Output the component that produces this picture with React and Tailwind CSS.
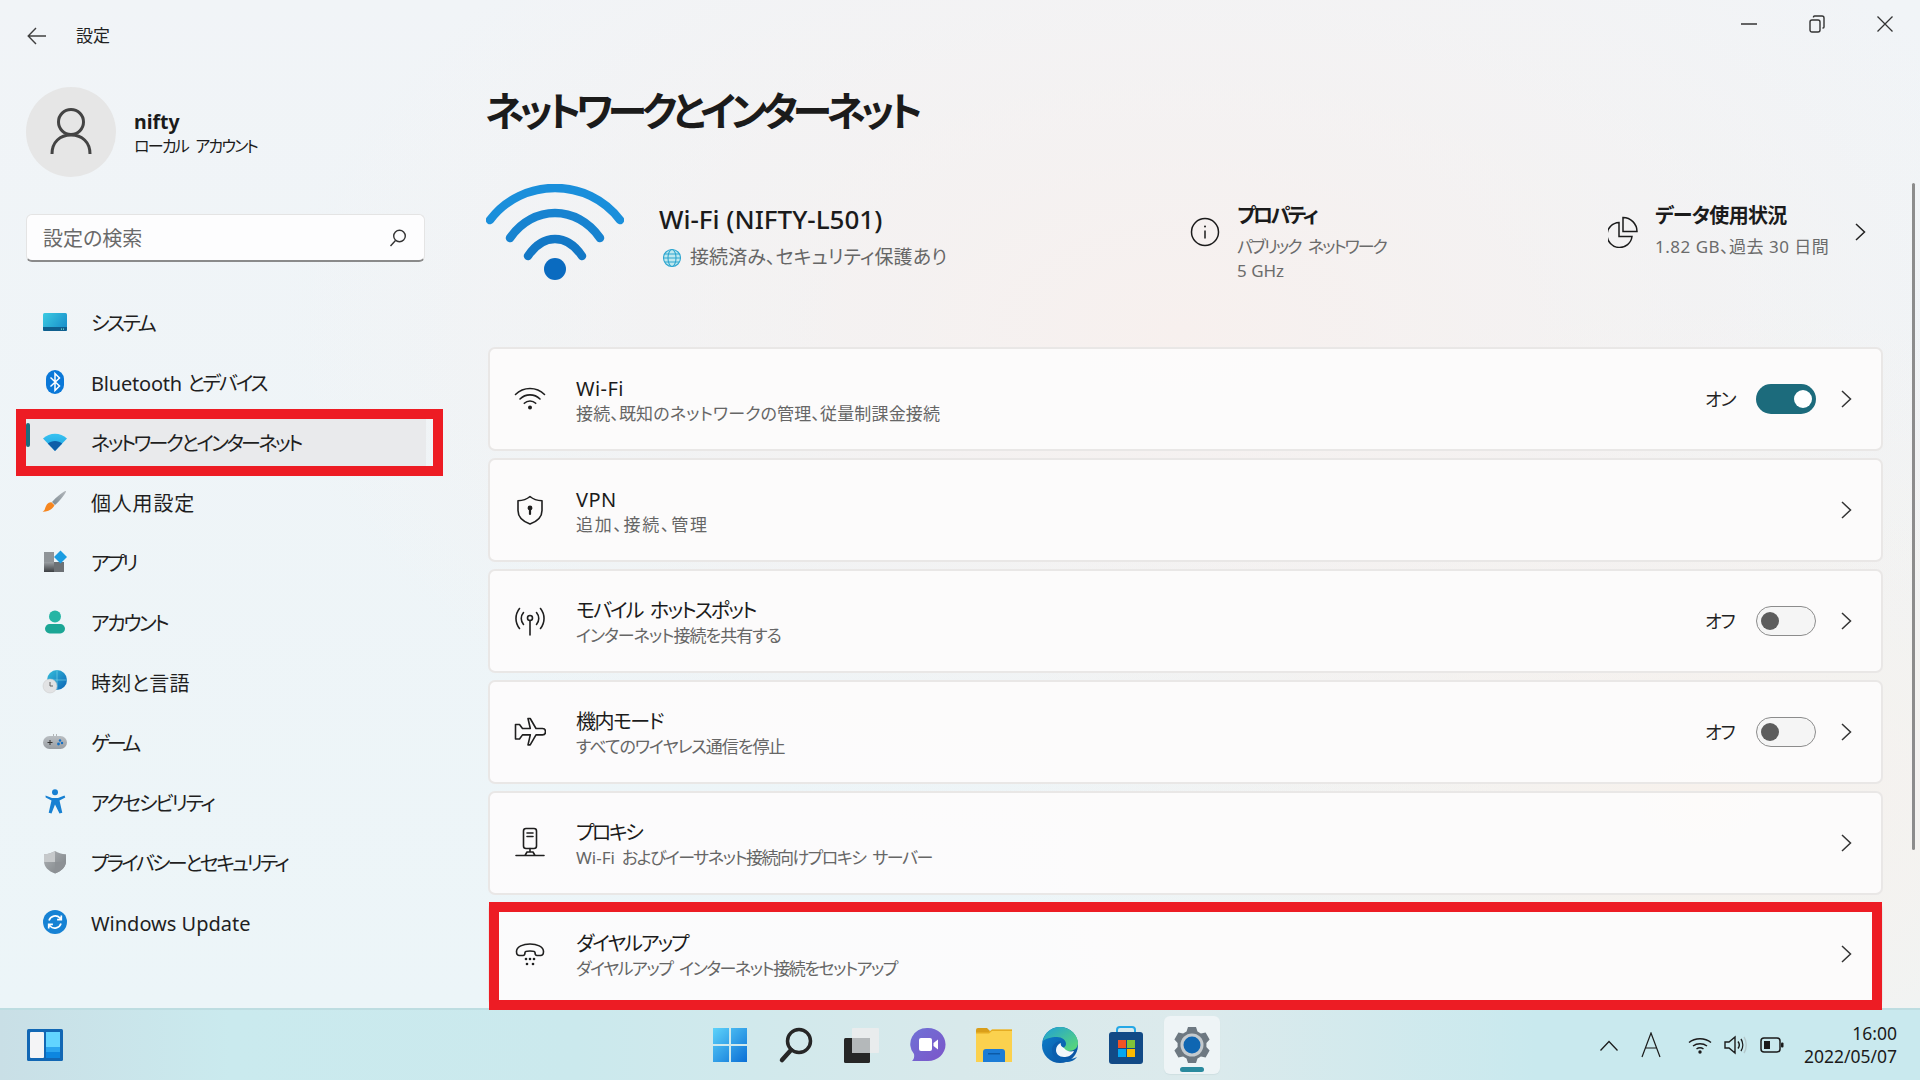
import React from "react";

const Arrow = () => (
  <svg width="20" height="18" viewBox="0 0 20 18" fill="none" stroke="#404040" strokeWidth="1.4"><path d="M19 9H1.5M9 1L1.2 9l7.8 8" /></svg>
);

const Chevron = ({ c = "#333" }) => (
  <svg width="11" height="18" viewBox="0 0 11 18" fill="none" stroke={c} strokeWidth="1.5"><path d="M1 1l8.5 8L1 17" /></svg>
);

const navIcons = {
  system: (
    <svg width="26" height="20" viewBox="0 0 26 20"><defs><linearGradient id="s1" x1="0" y1="0" x2="1" y2="0.6"><stop offset="0" stopColor="#3ccbe2" /><stop offset="1" stopColor="#1b93cc" /></linearGradient></defs><rect x="1" y="1" width="24" height="18" rx="1.5" fill="url(#s1)" /><path d="M1 15h24v2.5a1.5 1.5 0 0 1-1.5 1.5h-21A1.5 1.5 0 0 1 1 17.5z" fill="#0f5f8e" /><rect x="19" y="16.6" width="1" height="1" fill="#9fd" /><rect x="21" y="16.6" width="1" height="1" fill="#9fd" /></svg>
  ),
  bt: (
    <svg width="20" height="26" viewBox="0 0 20 26"><rect x="1" y="1" width="18" height="24" rx="9" fill="#0a78d8" /><path d="M5.5 8.5l9 8.5-4.5 4.500V4.500l4.500 4.500-9 8.500" fill="none" stroke="#fff" strokeWidth="1.5" /></svg>
  ),
  net: (
    <svg width="26" height="20" viewBox="0 0 26 20"><defs><linearGradient id="n1" x1="0" y1="0" x2="0" y2="1"><stop offset="0" stopColor="#38c3f1" /><stop offset="1" stopColor="#1a9fe0" /></linearGradient></defs><path d="M1 6.500C7.500 0 18.500 0 25 6.500L13 19z" fill="url(#n1)" /><path d="M5.800 11.500C9.800 8 16.200 8 20.200 11.500L13 19z" fill="#0f5ea8" /></svg>
  ),
  brush: (
    <svg width="26" height="24" viewBox="0 0 26 24"><defs><linearGradient id="b1" x1="0" y1="1" x2="1" y2="0"><stop offset="0" stopColor="#7d8a92" /><stop offset="1" stopColor="#b3b8bc" /></linearGradient></defs><path d="M24 1c.8.8-6 10-11 14l-3-3C14 7 23 .2 24 1z" fill="url(#b1)" /><path d="M9.500 12.300l3 3c-1.500 3.500-6 6.500-12 6.500 3-1.500 2.500-5 4.500-7.500 1.200-1.500 3-2.200 4.500-2z" fill="#f6861f" /></svg>
  ),
  apps: (
    <svg width="24" height="24" viewBox="0 0 24 24"><defs><linearGradient id="a1" x1="0" y1="0" x2="0" y2="1"><stop offset="0" stopColor="#9ba0a4" /><stop offset="1" stopColor="#3c3f42" /></linearGradient></defs><rect x="1" y="2" width="10" height="10" fill="#8f9498" /><rect x="1" y="12" width="10" height="10" fill="url(#a1)" /><rect x="11" y="12" width="10" height="10" fill="#6d7175" /><path d="M17.500 0.500L24 7l-6.500 6.500L11 7z" fill="#1b9de2" /></svg>
  ),
  account: (
    <svg width="22" height="24" viewBox="0 0 22 24"><circle cx="11" cy="6.500" r="6" fill="#26b5a4" /><rect x="1" y="14" width="20" height="9.500" rx="4.700" fill="#1ba695" /></svg>
  ),
  time: (
    <svg width="26" height="24" viewBox="0 0 26 24"><defs><linearGradient id="t1" x1="0" y1="0" x2="1" y2="1"><stop offset="0" stopColor="#35c0dc" /><stop offset="1" stopColor="#0b62b4" /></linearGradient></defs><circle cx="15" cy="10" r="10" fill="url(#t1)" /><path d="M5 10h20M15 0v20" stroke="#7fd6ea" strokeWidth=".6" /><circle cx="8" cy="16" r="7" fill="#e2e3e4" stroke="#c8c8c8" strokeWidth=".5" /><path d="M8 12v4h3" fill="none" stroke="#555" strokeWidth=".9" /></svg>
  ),
  game: (
    <svg width="26" height="16" viewBox="0 0 26 16"><defs><linearGradient id="g1" x1="0" y1="0" x2="0" y2="1"><stop offset="0" stopColor="#b9bec2" /><stop offset="1" stopColor="#999ea3" /></linearGradient></defs><rect x="1" y="2" width="24" height="13" rx="6.500" fill="url(#g1)" /><path d="M5.500 8.500h5M8 6v5" stroke="#333" strokeWidth="1" /><circle cx="18" cy="6.500" r="1.200" fill="#1570c4" /><circle cx="16.500" cy="10" r="1.400" fill="#1570c4" /><circle cx="20" cy="9" r="1.200" fill="#1570c4" /><rect x="11" y="0.500" width="1" height="1" fill="#777" /><rect x="14" y="0.500" width="1" height="1" fill="#777" /></svg>
  ),
  access: (
    <svg width="22" height="26" viewBox="0 0 22 26"><circle cx="11" cy="3.200" r="3" fill="#1780d2" /><path d="M1.500 6.500l6.500 2.400h6l6.500-2.400.8 2-5.800 3 2.800 12.200-2.800.8L11 15.500 7.500 24.500l-2.800-.8 2.800-12.200-5.800-3z" fill="#1780d2" /></svg>
  ),
  privacy: (
    <svg width="24" height="24" viewBox="0 0 24 24"><defs><linearGradient id="p1" x1="0" y1="0" x2="1" y2="1"><stop offset="0" stopColor="#aeb2b5" /><stop offset="1" stopColor="#7c8185" /></linearGradient></defs><path d="M12 1c3 2 6.500 3 11 3.200v7C23 17 18.500 21 12 23.500 5.500 21 1 17 1 11.200v-7C5.500 4 9 3 12 1z" fill="url(#p1)" /><path d="M12 1v11H1v-.8-7C5.500 4 9 3 12 1z" fill="#c6c9cb" /><path d="M12 12h11c-.6 5.500-5 9.200-11 11.500z" fill="#8d9195" /></svg>
  ),
  update: (
    <svg width="24" height="24" viewBox="0 0 24 24"><circle cx="12" cy="12" r="12" fill="#1682d4" /><path d="M6 10.500a6.500 6.500 0 0 1 11-2.500l1 1.500M18.300 5.500v4.200h-4.200M18 13.500a6.500 6.500 0 0 1-11 2.500l-1-1.500M5.700 18.500v-4.200h4.200" fill="none" stroke="#fff" strokeWidth="1.700" /></svg>
  ),
};

const navItems = [
  ["system", "システム", "tracking-[-2.400px]"],
  ["bt", <>Bluetooth <span className="tracking-[-2.200px]">とデバイス</span></>, "tracking-[-0.200px]"],
  ["net", "ネットワークとインターネット", "tracking-[-2.600px]", true],
  ["brush", "個人用設定", "tracking-[0.800px]"],
  ["apps", "アプリ", "tracking-[-3px]"],
  ["account", "アカウント", "tracking-[-2.400px]"],
  ["time", "時刻と言語", "tracking-[0.200px]"],
  ["game", "ゲーム", "tracking-[-3.500px]"],
  ["access", "アクセシビリティ", "tracking-[-2.200px]"],
  ["privacy", "プライバシーとセキュリティ", "tracking-[-2.700px]"],
  ["update", "Windows Update", "tracking-[0px]"],
];

const Ln = ({ children, w = 32, h = 32, sw = 1.6 }) => (
  <svg width={w} height={h} viewBox={`0 0 ${w} ${h}`} fill="none" stroke="#1f1f1f" strokeWidth={sw} strokeLinecap="round" strokeLinejoin="round">{children}</svg>
);

const cardIcons = {
  wifi: (
    <Ln>
      <path d="M1.500 11.500C9.500 3.500 22.500 3.500 30.500 11.500M6 16C11.500 10.500 20.500 10.500 26 16M10.300 20.300C13.500 17.200 18.500 17.200 21.700 20.300" />
      <circle cx="16" cy="24.500" r="2" fill="#1f1f1f" stroke="none" />
    </Ln>
  ),
  vpn: (
    <Ln>
      <path d="M16 2.500c3 2.500 7 4 12 4.300v9.700c0 6.500-4.500 10.800-12 13.500C8.500 27.300 4 23 4 16.500V6.800c5-.3 9-1.800 12-4.300z" />
      <circle cx="16" cy="14" r="2.400" fill="#1f1f1f" stroke="none" />
      <path d="M16 14v6" strokeWidth="2.200" />
    </Ln>
  ),
  hotspot: (
    <Ln>
      <circle cx="16" cy="13" r="2.500" />
      <path d="M16 15.500V30M9.500 7.500C6.500 11 6.500 16 9.500 19.500M22.500 7.500C25.500 11 25.500 16 22.500 19.500M5.500 3.500C.8 9.500 .8 17.500 5.500 23.500M26.500 3.500C31.200 9.500 31.200 17.500 26.500 23.500" />
    </Ln>
  ),
  plane: (
    <Ln>
      <path d="M14 2.500h2.200L22 12.500h6.500c2 0 3 1.500 3 3.200s-1 3.200-3 3.200H22l-5.800 10h-2.200l2.300-10H8.500L5.500 23H1.500V8.500h4l3 4h7.800z" />
    </Ln>
  ),
  proxy: (
    <Ln>
      <rect x="9.500" y="1.500" width="13" height="20" rx="2.500" />
      <path d="M13 6h6M13 9.500h6M16 21.500v3M2 28.500h9M21 28.500h9M11 28.500l2-3.500h6l2 3.500z" />
    </Ln>
  ),
  dial: (
    <Ln>
      <path d="M2.500 13.500C2.500 3.500 29.500 3.500 29.500 13.500c0 3-1 4-3 4h-3.500c-1.500 0-2-1-2-3 0-2-10-2-10 0 0 2-.5 3-2 3H5.500c-2 0-3-1-3-4z" />
      <g fill="#1f1f1f" stroke="none"><circle cx="12" cy="21" r="1.300" /><circle cx="16" cy="21" r="1.300" /><circle cx="20" cy="21" r="1.300" /><circle cx="13" cy="26" r="1.300" /><circle cx="19" cy="26" r="1.300" /></g>
    </Ln>
  ),
};

const cards = [
  ["wifi", "Wi-Fi", "接続、既知のネットワークの管理、従量制課金接続", "オン", "tracking-[0.400px]", "tracking-[0.150px]"],
  ["vpn", "VPN", "追加、接続、管理", null, "tracking-[0.400px]", "tracking-[1.700px]"],
  ["hotspot", "モバイル ホットスポット", "インターネット接続を共有する", "オフ", "tracking-[-1.900px] [word-spacing:4px]", "tracking-[-1px]"],
  ["plane", "機内モード", "すべてのワイヤレス通信を停止", "オフ", "tracking-[-1.500px]", "tracking-[-1px]"],
  ["proxy", "プロキシ", <><span className="tracking-[0px]">Wi-Fi</span> およびイーサネット接続向けプロキシ サーバー</>, null, "tracking-[-2.500px]", "tracking-[-1.500px] [word-spacing:4px]"],
  ["dial", "ダイヤルアップ", "ダイヤルアップ インターネット接続をセットアップ", null, "tracking-[-2px]", "tracking-[-1.500px] [word-spacing:4px]"],
];

function Toggle({ on }) {
  return on ? (
    <div className="flex h-[30px] w-[60px] items-center justify-end rounded-full bg-[#1c6b7c] pr-[4px]">
      <div className="h-[18px] w-[18px] rounded-full bg-white" />
    </div>
  ) : (
    <div className="flex h-[30px] w-[60px] items-center rounded-full border-[1.5px] border-[#8c8c8c] bg-[#f5f5f5] pl-[4px]">
      <div className="h-[18px] w-[18px] rounded-full bg-[#5d5d5d]" />
    </div>
  );
}

function Card({ icon, title, sub, state, tt, ts }) {
  return (
    <div className="flex h-[104px] shrink-0 items-center rounded-[7px] border-2 border-[#e9e7e6] bg-[#fdfcfc]/90 pr-[29px]">
      <div className="flex w-[79px] justify-center pl-[1px]">{cardIcons[icon]}</div>
      <div className="ml-[7px] flex flex-1 flex-col pt-[3px]">
        <div className={"text-[20px] leading-[26px] text-[#1b1b1b] " + tt}>{title}</div>
        <div className={"text-[17px] leading-[24px] text-[#666] " + ts}>{sub}</div>
      </div>
      {state && (
        <div className="flex items-center">
          <span className="w-[51px] text-[18px] tracking-[-1px] text-[#222]">{state}</span>
          <Toggle on={state === "オン"} />
        </div>
      )}
      <div className="ml-[25px]"><Chevron /></div>
    </div>
  );
}

const tb = {
  win: (
    <svg width="36" height="36" viewBox="0 0 36 36"><defs><linearGradient id="w1" x1="0" y1="0" x2="1" y2="1"><stop offset="0" stopColor="#5ed3fa" /><stop offset="1" stopColor="#0a6fd6" /></linearGradient></defs><path d="M1 1h16v16H1zM19 1h16v16H19zM1 19h16v16H1zM19 19h16v16H19z" fill="url(#w1)" /></svg>
  ),
  search: (
    <svg width="36" height="38" viewBox="0 0 36 38" fill="none"><circle cx="21" cy="15" r="11.500" stroke="#262626" strokeWidth="3.500" /><path d="M13 24L4 34" stroke="#262626" strokeWidth="4.500" strokeLinecap="round" /></svg>
  ),
  task: (
    <svg width="38" height="36" viewBox="0 0 38 36"><rect x="1" y="11" width="26" height="25" rx="1.500" fill="#262626" /><rect x="9" y="1" width="27" height="25" rx="1" fill="#e9eced" /><rect x="9" y="11" width="18" height="15" fill="#b4b8ba" /></svg>
  ),
  chat: (
    <svg width="36" height="36" viewBox="0 0 36 36"><defs><linearGradient id="c1" x1="0" y1="0" x2="1" y2="1"><stop offset="0" stopColor="#6f72d6" /><stop offset="1" stopColor="#7c55c9" /></linearGradient></defs><path d="M18 1a17 16 0 0 1 0 33H2c2-1.500 2.500-4 2-7A17 16 0 0 1 18 1z" fill="url(#c1)" /><rect x="9" y="11" width="13" height="13" rx="2" fill="#fff" /><path d="M23.500 16l4.500-3.500v10L23.500 19z" fill="#fff" /></svg>
  ),
  folder: (
    <svg width="38" height="36" viewBox="0 0 38 36"><path d="M1 3a2 2 0 0 1 2-2h9l4 4h-15z" fill="#d99e1a" /><path d="M1 5h13l3-2.500h20V35H1z" fill="#fbd14e" /><path d="M1 5h13l3-2.500h20v1.500H17L14 6.500H1z" fill="#e5ac22" /><path d="M8 35V25a3 3 0 0 1 3-3h16a3 3 0 0 1 3 3v10z" fill="#1c7cd6" /><rect x="13" y="26" width="12" height="1.500" fill="#0c5aa6" /></svg>
  ),
  edge: (
    <svg width="38" height="38" viewBox="0 0 38 38"><defs><linearGradient id="e1" x1="0" y1="0" x2="1" y2="1"><stop offset="0" stopColor="#1f9fd6" /><stop offset="1" stopColor="#5fdb72" /></linearGradient><linearGradient id="e2" x1="0" y1="0" x2="1" y2="1"><stop offset="0" stopColor="#0d82ce" /><stop offset="1" stopColor="#094c9c" /></linearGradient></defs><circle cx="19" cy="19" r="18" fill="url(#e2)" /><path d="M2 15C4 6 11 1 19 1c10 0 18 8 18 16 0 5-4 8-9 8-3 0-6-1-7-3 2 0 4-2 4-4 0-4-4-7-9-7-6 0-12 2-14 4z" fill="url(#e1)" /><path d="M20 15c-5 0-9 4-9 9 0 6 5 12 14 12 5 0 9-2 11-5-2 1-5 2-8 2-7 0-11-4-11-9 0-4 1-7 3-9z" fill="#0a5fae" /><path d="M23 22c2 3 6 4 10 3-2 5-7 6-10 6-5 0-8-3-8-7 0-3 2-6 5-7-1 2 1 4 3 5z" fill="#fff" opacity=".95" /></svg>
  ),
  store: (
    <svg width="36" height="38" viewBox="0 0 36 38"><path d="M9 8V4a3 3 0 0 1 3-3h12a3 3 0 0 1 3 3v4" fill="none" stroke="#25a8e6" strokeWidth="2" /><rect x="1" y="6" width="34" height="32" rx="3" fill="#124a86" /><rect x="10" y="14" width="8" height="8" fill="#f25325" /><rect x="19" y="14" width="8" height="8" fill="#80c33a" /><rect x="10" y="23" width="8" height="8" fill="#05a6f0" /><rect x="19" y="23" width="8" height="8" fill="#fdb900" /></svg>
  ),
  gear: (
    <svg width="38" height="38" viewBox="0 0 38 38"><path d="M15 1h8l1.500 4.600 3.400 1.900 4.700-1 4 6.900-3.200 3.600v4l3.200 3.600-4 6.900-4.700-1-3.400 1.900L23 37h-8l-1.500-4.600-3.400-1.900-4.700 1-4-6.900L4.600 21v-4L1.400 13.400l4-6.900 4.700 1 3.400-1.900z" fill="#6d7881" /><circle cx="19" cy="19" r="11.500" fill="#c4cace" /><circle cx="19" cy="19" r="8.500" fill="#0f66b2" /></svg>
  ),
};

const taskItems = ["win", "search", "task", "chat", "folder", "edge", "store"];

export default function App() {
  return (
    <div className="relative flex h-[1080px] w-[1920px] flex-col overflow-hidden [font-family:'Noto_Sans','Noto_Sans_CJK_JP',sans-serif] [font-feature-settings:'palt'] text-[#1b1b1b]">
      <div className="flex h-[1008px] overflow-hidden bg-[radial-gradient(ellipse_900px_520px_at_1180px_330px,#f7f0ee_0%,#f7f0ee00_100%),radial-gradient(ellipse_700px_500px_at_1700px_800px,#f7f1ec_0%,#f7f1ec00_100%),linear-gradient(180deg,#f1f4f7_0%,#ecf5f8_100%)]">
        {/* sidebar */}
        <aside className="flex w-[486px] shrink-0 flex-col pl-[26px]">
          <div className="flex h-[72px] items-center pl-[1px]">
            <Arrow />
            <span className="ml-[29px] text-[17px] text-[#222]">設定</span>
          </div>
          <div className="mt-[15px] flex items-center">
            <div className="flex h-[90px] w-[90px] items-center justify-center rounded-full bg-[#e6e6e6]">
              <svg width="42" height="48" viewBox="0 0 42 48" fill="none" stroke="#444" strokeWidth="3"><circle cx="21" cy="14" r="12.500" /><path d="M2 46c0-12 8-19 19-19s19 7 19 19" /></svg>
            </div>
            <div className="ml-[18px] flex flex-col pt-[2px]">
              <span className="text-[19.500px] font-bold leading-[26px]">nifty</span>
              <span className="text-[16px] leading-[22px] tracking-[-1.800px] [word-spacing:5px]">ローカル アカウント</span>
            </div>
          </div>
          <div className="mt-[37px] flex h-[48px] w-[399px] items-center justify-between rounded-[6px] border border-[#e4e4e4] border-b-2 border-b-[#8a8a8a] bg-[#fdfdfe] pl-[16px] pr-[17px]">
            <span className="pt-[2px] text-[20px] text-[#6a6a6a]">設定の検索</span>
            <svg width="18" height="18" viewBox="0 0 18 18" fill="none" stroke="#333" strokeWidth="1.400"><circle cx="10.500" cy="7" r="5.800" /><path d="M6.500 11.500L1.500 17" /></svg>
          </div>
          <nav className="mt-[30px] flex flex-col">
            {navItems.map(([ic, label, tr, sel]) => (
              <div key={ic} className={sel ? "relative flex h-[60px] w-[400px] items-center bg-[#e9eaec]" : "flex h-[60px] w-[400px] items-center"}>
                {sel && <div className="absolute left-0 top-[11px] h-[24px] w-[4px] rounded-[2px] bg-[#1c6b7c]" />}
                <div className="flex w-[58px] justify-center">{navIcons[ic]}</div>
                <span className={"ml-[7px] pt-[3px] text-[20px] text-[#1f1f1f] " + tr}>{label}</span>
              </div>
            ))}
          </nav>
        </aside>

        {/* main */}
        <main className="flex min-w-0 flex-1 flex-col pr-[37px]">
          <h1 className="-ml-[1px] mt-[86px] h-[50px] text-[40px] font-bold leading-[50px] tracking-[-5.300px] text-[#1b1b1b]">ネットワークとインターネット</h1>
          <div className="mt-[48px] flex h-[96px] shrink-0 items-center">
            <svg width="138" height="96" viewBox="0 0 138 96" fill="none" className="shrink-0"><g strokeWidth="8.500" strokeLinecap="round"><path d="M4 36C36 -6.700 102 -6.700 134 36" stroke="#1a8fdb" /><path d="M24 54C47 20.700 91 20.700 114 54" stroke="#1783d0" /><path d="M42 72C57 49.300 81 49.300 96 72" stroke="#1378c6" /></g><circle cx="69" cy="85" r="11" fill="#0a6bc0" /></svg>
            <div className="ml-[35px] flex w-[531px] flex-col pt-[9px]">
              <div className="text-[26px] font-medium leading-[36px] text-[#1b1b1b]">Wi-Fi (NIFTY-L501)</div>
              <div className="mt-[6px] flex items-center">
                <svg width="20" height="20" viewBox="0 0 20 20" fill="none" stroke="#2ea6d0" strokeWidth="1.100" className="ml-[3px]"><circle cx="10" cy="10" r="8.500" fill="#bfe8ee" /><ellipse cx="10" cy="10" rx="4" ry="8.500" /><path d="M1.500 10h17M2.500 6h15M2.500 14h15" /></svg>
                <span className="ml-[8px] text-[19px] tracking-[0.1px] text-[#666]">接続済み、セキュリティ保護あり</span>
              </div>
            </div>
            <div className="flex w-[418px] items-center">
              <svg width="30" height="30" viewBox="0 0 30 30" fill="none" stroke="#1b1b1b" strokeWidth="1.500" className="shrink-0"><circle cx="15" cy="15" r="13.500" /><path d="M15 13.500v8" /><circle cx="15" cy="9.500" r="1" fill="#1b1b1b" stroke="none" /></svg>
              <div className="ml-[17px] flex flex-col pt-[22px]">
                <span className="text-[20px] font-bold leading-[26px] tracking-[-2.600px]">プロパティ</span>
                <span className="mt-[5px] text-[17px] leading-[25px] tracking-[-2px] [word-spacing:5px] text-[#6b6b6b]">パブリック ネットワーク</span>
                <span className="text-[17px] leading-[24px] text-[#6b6b6b]">5 GHz</span>
              </div>
            </div>
            <div className="flex flex-1 items-center">
              <svg width="30" height="32" viewBox="0 0 30 32" fill="none" stroke="#1b1b1b" strokeWidth="1.500" className="shrink-0"><path d="M11 6.500A12.500 12.500 0 1 0 24 20.500H11z" /><path d="M15 1.500a14 14 0 0 1 14 14H15z" /></svg>
              <div className="ml-[17px] flex flex-col pb-[2px]">
                <span className="text-[20px] font-bold leading-[26px] tracking-[-0.700px]">データ使用状況</span>
                <span className="mt-[4.500px] text-[17px] leading-[25px] tracking-[0.500px] text-[#6b6b6b]">1.82 GB、過去 30 日間</span>
              </div>
              <div className="ml-auto mr-[17px]"><Chevron c="#222" /></div>
            </div>
          </div>
          <div className="ml-[2px] mt-[67px] flex flex-col gap-[7px]">
            {cards.map(([icon, title, sub, state, tt, ts]) => (
              <Card key={icon} icon={icon} title={title} sub={sub} state={state} tt={tt} ts={ts} />
            ))}
          </div>
        </main>
      </div>

      {/* taskbar */}
      <footer className="flex h-[72px] shrink-0 items-center border-t-2 border-[#bddde1] bg-[linear-gradient(90deg,#c9dfe6_0%,#caeaee_12%,#cbe9ed_30%,#d8e9eb_50%,#dceaec_62%,#c9e9ee_80%,#c9e9ee_100%)]">
        <div className="w-[697px] pl-[27px]">
          <svg width="36" height="32" viewBox="0 0 36 32"><rect width="36" height="32" rx="1.500" fill="#1267b4" /><rect x="3" y="3" width="14" height="26" rx="1" fill="#f4f4f6" /><rect x="19" y="3" width="14" height="15" fill="#62d4ff" /><rect x="19" y="18" width="14" height="5" fill="#2ba5ef" /><rect x="19" y="23" width="14" height="6" fill="#0d86e0" /></svg>
        </div>
        <div className="flex items-center">
          {taskItems.map((k) => (
            <div key={k} className="flex h-[58px] w-[66px] items-center justify-center">{tb[k]}</div>
          ))}
          <div className="relative ml-[5px] flex h-[58px] w-[56px] items-center justify-center rounded-[6px] bg-[#eef4f6] shadow-[0_1px_1px_#cfdfe2]">
            {tb.gear}
            <div className="absolute bottom-[2px] h-[5px] w-[24px] rounded-full bg-[#2a8a9e]" />
          </div>
        </div>
        <div className="ml-[380px] flex items-center">
          <svg width="18" height="11" viewBox="0 0 18 11" fill="none" stroke="#1b1b1b" strokeWidth="1.300"><path d="M.5 10.500L9 1.500l8.500 9" /></svg>
          <svg width="20" height="26" viewBox="0 0 20 26" fill="none" stroke="#1b1b1b" strokeWidth="1.200" className="ml-[23px]"><path d="M1 25L10 1l9 24M4.500 16h11" /></svg>
          <svg width="24" height="17" viewBox="0 0 24 17" fill="none" stroke="#1b1b1b" strokeWidth="1.500" className="ml-[27px]"><path d="M1 5.500C7 .5 17 .5 23 5.500M5 9C9 6 15 6 19 9M8.500 12c2-1.500 5-1.500 7 0" /><circle cx="12" cy="15" r="1.700" fill="#1b1b1b" stroke="none" /></svg>
          <svg width="24" height="20" viewBox="0 0 24 20" fill="none" stroke="#1b1b1b" strokeWidth="1.400" className="ml-[12px]"><path d="M1 7h4l6-5v16l-6-5H1zM14 6.500c1.500 2 1.500 5 0 7M17 4c2.300 3.500 2.300 8.500 0 12" /><path d="M20 2c3 4.500 3 11.500 0 16" stroke="#b5c9cc" /></svg>
          <svg width="24" height="16" viewBox="0 0 24 16" fill="none" stroke="#1b1b1b" strokeWidth="1.500" className="ml-[12px]"><rect x="1" y="1" width="19" height="14" rx="3" /><rect x="4" y="4" width="6" height="8" fill="#1b1b1b" stroke="none" /><rect x="21" y="5.500" width="2.500" height="5" rx="1" fill="#1b1b1b" stroke="none" /></svg>
        </div>
        <div className="ml-[16px] flex w-[97px] flex-col items-end text-[17.500px] leading-[23px] text-[#1b1b1b]">
          <span>16:00</span>
          <span>2022/05/07</span>
        </div>
      </footer>

      {/* window controls */}
      <div className="absolute right-[27px] top-[15px] flex items-center gap-[52px]">
        <svg width="16" height="2" viewBox="0 0 16 2"><path d="M0 1h16" stroke="#333" strokeWidth="1.500" /></svg>
        <svg width="16" height="18" viewBox="0 0 16 18" fill="none" stroke="#333" strokeWidth="1.400"><rect x="1" y="5" width="10" height="12" rx="2" /><path d="M4.500 2.500V2a1 1 0 0 1 1-1H13a2 2 0 0 1 2 2v9a1 1 0 0 1-1 1h-.5" /></svg>
        <svg width="16" height="16" viewBox="0 0 16 16" fill="none" stroke="#333" strokeWidth="1.300"><path d="M.5.500l15 15M15.500.500l-15 15" /></svg>
      </div>

      {/* scrollbar */}
      <div className="absolute left-[1912px] top-[183px] h-[667px] w-[3px] rounded-full bg-[#8c8c8c]" />

      {/* annotation boxes */}
      <div className="absolute left-[16px] top-[409px] h-[67px] w-[427px] border-[10px] border-[#ed1c24]" />
      <div className="absolute left-[489px] top-[902px] h-[108px] w-[1393px] border-[10px] border-[#ed1c24]" />
    </div>
  );
}
